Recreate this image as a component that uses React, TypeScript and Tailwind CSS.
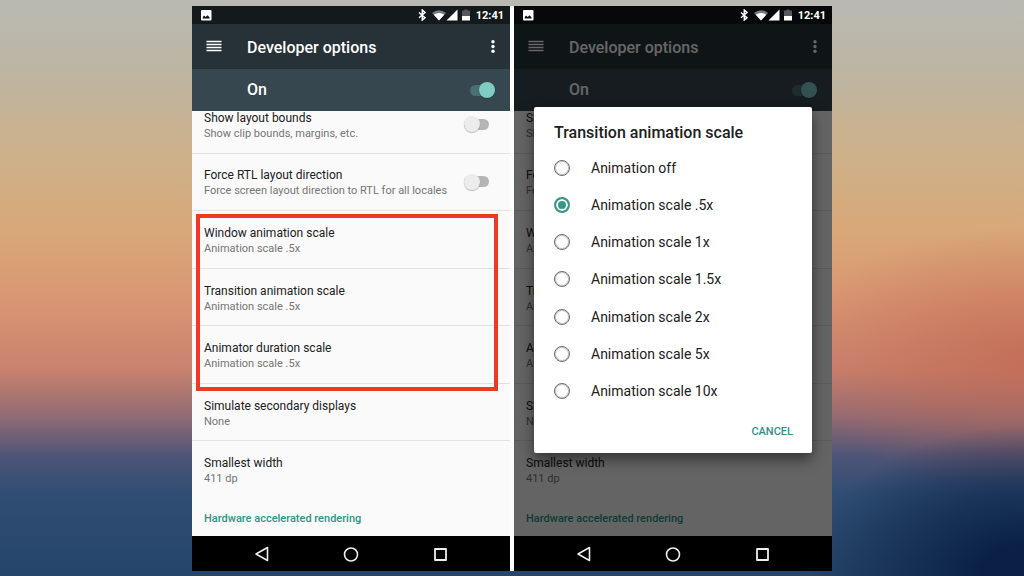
import React from "react";

type Row = { title: string; sub: string; toggle?: boolean };

const topRows: Row[] = [
  { title: "Show layout bounds", sub: "Show clip bounds, margins, etc.", toggle: true },
  { title: "Force RTL layout direction", sub: "Force screen layout direction to RTL for all locales", toggle: true },
];
const scaleRows: Row[] = [
  { title: "Window animation scale", sub: "Animation scale .5x" },
  { title: "Transition animation scale", sub: "Animation scale .5x" },
  { title: "Animator duration scale", sub: "Animation scale .5x" },
];
const options = ["Animation off", "Animation scale .5x", "Animation scale 1x", "Animation scale 1.5x", "Animation scale 2x", "Animation scale 5x", "Animation scale 10x"];

function StatusBar({ dark }: { dark: boolean }) {
  return (
    <div className={`flex h-[18px] shrink-0 items-center pl-2 pr-[6px] text-white ${dark ? "bg-[#060809]" : "bg-[#14191c]"}`}>
      <svg className="h-3 w-3" viewBox="0 0 12 12" aria-hidden="true">
        <rect x="1" y="1" width="10.500" height="10.500" rx="1" fill="#fff" />
        <path d="M2.800 9.500V8l1.300-1.500 1.600 1.500 1.800-1.800 2 2v1.300z" fill="#111" />
      </svg>
      <div className="ml-auto flex items-center">
        <svg className="h-3 w-3" viewBox="0 0 12 12" fill="none" stroke="#fff" strokeWidth="1.500" aria-hidden="true">
          <path d="m3 3.500 6 5.200L6.300 11V1L9 3.500 3 8.700" />
        </svg>
        <svg className="ml-1 h-3 w-[14px]" viewBox="0 0 14 12" aria-hidden="true">
          <path d="M0 4Q7-1.500 14 4L7 11.500z" fill="#777c7e" />
          <path d="M1.800 5.800Q7 2.200 12.200 5.800L7 11.500z" fill="#fff" />
        </svg>
        <svg className="h-3 w-3" viewBox="0 0 12 12" aria-hidden="true">
          <path d="M.5 11.500 11.500.5v11z" fill="#fff" />
        </svg>
        <svg className="ml-1 h-3 w-2" viewBox="0 0 8 12" aria-hidden="true">
          <path d="M2.500.5h3v1H8v5.500H0v-5.500h2.500z" fill="#55595b" />
          <path d="M0 7h8v4.500H0z" fill="#fff" />
        </svg>
        <span className="ml-[6px] pt-[2px] text-[11px] font-bold leading-4">12:41</span>
      </div>
    </div>
  );
}

function Toggle({ label, on = false }: { label: string; on?: boolean }) {
  return (
    <label className="relative flex h-4 w-[25px] shrink-0 items-center">
      <input type="checkbox" role="switch" aria-label={label} defaultChecked={on} className="peer h-[11px] w-full appearance-none rounded-full bg-[#b5b5b5] checked:bg-[#4a6f72]" />
      <span className="absolute left-0 h-4 w-4 rounded-full bg-[#ececec] shadow-[0_1px_1px_rgba(0,0,0,0.25)] peer-checked:left-auto peer-checked:right-0 peer-checked:bg-[#80cbc4]" />
    </label>
  );
}

function SettingRow({ row, last = false }: { row: Row; last?: boolean }) {
  return (
    <li className={`flex flex-1 items-center justify-between border-b pl-3 pr-[21px] ${last ? "border-transparent" : "border-[#e2e2e2]"}`}>
      <div className="pt-[3px]">
        <p className="text-xs leading-4 text-[#212121]">{row.title}</p>
        <p className="text-[11px] leading-4 text-[#757575]">{row.sub}</p>
      </div>
      {row.toggle && <Toggle label={row.title} />}
    </li>
  );
}

function NavBar() {
  return (
    <nav className="flex h-[35px] shrink-0 items-center justify-center gap-[73px] bg-black">
      <button aria-label="Back">
        <svg className="h-4 w-4" viewBox="0 0 16 16" fill="none" stroke="#eee" strokeWidth="1.600" strokeLinejoin="round" aria-hidden="true">
          <path d="M13.500 1.500v13L2 8z" />
        </svg>
      </button>
      <button aria-label="Home">
        <svg className="h-4 w-4" viewBox="0 0 16 16" fill="none" stroke="#eee" strokeWidth="1.600" aria-hidden="true">
          <circle cx="8" cy="8.500" r="6.500" />
        </svg>
      </button>
      <button aria-label="Recent apps">
        <svg className="h-4 w-4" viewBox="0 0 16 16" fill="none" stroke="#eee" strokeWidth="1.800" strokeLinejoin="round" aria-hidden="true">
          <rect x="3" y="3" width="11" height="11" />
        </svg>
      </button>
    </nav>
  );
}

function ScaleDialog() {
  return (
    <div className="absolute inset-0 flex items-center justify-center bg-black/60 px-5">
      <div role="dialog" aria-labelledby="dialog-title" className="w-full rounded-[2px] bg-white shadow-[0_6px_14px_rgba(0,0,0,0.5)]">
        <h2 id="dialog-title" className="px-5 pb-[6px] pt-4 text-base font-medium leading-5 text-[#212121]">
          Transition animation scale
        </h2>
        <div role="radiogroup" aria-labelledby="dialog-title" className="flex h-[261px] flex-col">
          {options.map((option, i) => (
            <label key={option} className="flex flex-1 items-center gap-[21px] px-5 text-sm text-[#212121]">
              <input type="radio" name="scale" defaultChecked={i === 1} className="h-4 w-4 appearance-none rounded-full border border-[#6a6a6a] shadow-[inset_0_0_0_1px_#c8c8c8] checked:border-2 checked:border-[#3a9686] checked:bg-[#3a9686] checked:shadow-[inset_0_0_0_2px_#fff]" />
              {option}
            </label>
          ))}
        </div>
        <div className="flex h-[43px] items-center justify-end px-[19px]">
          <button className="text-[11px] font-medium leading-4 text-[#2f9483]">CANCEL</button>
        </div>
      </div>
    </div>
  );
}

function Phone({ dialog = false }: { dialog?: boolean }) {
  return (
    <section className="flex min-w-0 flex-1 flex-col">
      <StatusBar dark={dialog} />
      <div className="relative flex min-h-0 flex-1 flex-col">
        <header className="flex h-[45px] shrink-0 items-center bg-[#263238] px-[14px] text-white">
          <button aria-label="Menu">
            <svg className="h-4 w-4" viewBox="0 0 16 16" stroke="#fff" strokeWidth="1.500" aria-hidden="true">
              <path d="M.5 2.500h15M.5 5.500h15M.5 8.500h15M.5 11.500h15" />
            </svg>
          </button>
          <h1 className="ml-[25px] pt-[2px] text-base font-medium leading-5">Developer options</h1>
          <button aria-label="More options" className="ml-auto">
            <svg className="h-4 w-[6px]" viewBox="0 0 6 16" fill="#fff" aria-hidden="true">
              <circle cx="3" cy="2.800" r="1.700" />
              <circle cx="3" cy="7.500" r="1.700" />
              <circle cx="3" cy="12.200" r="1.700" />
            </svg>
          </button>
        </header>
        <div className="flex h-[42px] shrink-0 items-center justify-between bg-[#37474f] pl-[55px] pr-[15px] text-white">
          <span className="text-base font-medium leading-5">On</span>
          <Toggle label="Developer options" on />
        </div>
        <div className="flex min-h-0 flex-1 flex-col overflow-hidden bg-[#fafafa]">
          <div className="-mt-[15px] flex flex-1 flex-col">
            <ul className="flex flex-[2] flex-col">
              {topRows.map((row) => <SettingRow key={row.title} row={row} />)}
            </ul>
            <div className="relative flex flex-[3] flex-col">
              <ul className="flex flex-1 flex-col">
                {scaleRows.map((row) => <SettingRow key={row.title} row={row} />)}
              </ul>
              {!dialog && <div className="absolute -bottom-[7px] left-1 right-3 top-[3px] border-4 border-[#ee3a24]" />}
            </div>
            <ul className="flex flex-[2] flex-col">
              <SettingRow row={{ title: "Simulate secondary displays", sub: "None" }} />
              <SettingRow row={{ title: "Smallest width", sub: "411 dp" }} last />
            </ul>
            <h2 className="h-[37px] px-3 pt-3 text-[11px] font-medium leading-4 text-[#2f9483]">Hardware accelerated rendering</h2>
          </div>
        </div>
        {dialog && <ScaleDialog />}
      </div>
      <NavBar />
    </section>
  );
}

export default function App() {
  return (
    <main className="flex min-h-screen justify-center bg-[radial-gradient(220px_150px_at_100%_100%,#0a2145_20%,#0a214500_100%),radial-gradient(240px_130px_at_100%_62%,#c0664fb0_0%,#c0664f00_100%),linear-gradient(180deg,#b9b9b3_0%,#bdb5a3_12%,#cdb189_27%,#d9a878_40%,#d99672_52%,#c9826f_64%,#946c74_72%,#4f5578_79%,#2f4d73_86%,#26456a_100%)] px-48 pb-[5px] pt-[6px] font-['Roboto',sans-serif]">
      <div className="flex w-full gap-1 bg-white">
        <Phone />
        <Phone dialog />
      </div>
    </main>
  );
}
